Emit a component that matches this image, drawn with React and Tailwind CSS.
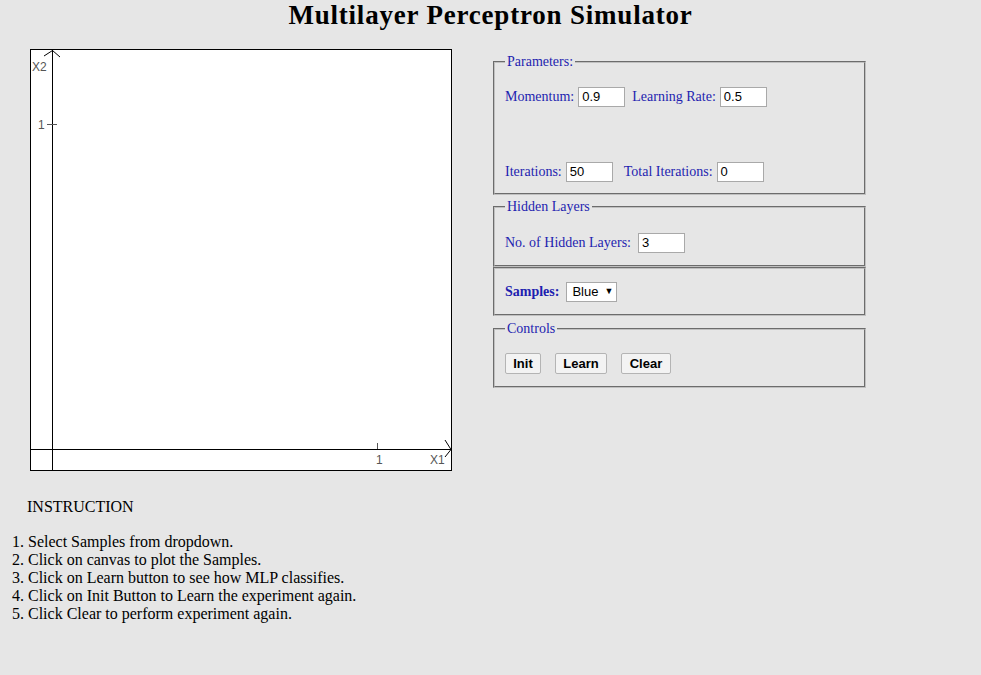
// App.jsx
import React from 'react';

const serif = "font-['Liberation_Serif','Times_New_Roman',serif]";
const sans = "font-['Liberation_Sans',Arial,sans-serif]";

function Field({ value }) {
    return (
        <div className={`w-[47px] h-[20px] bg-white border border-[#a9a9a9] pl-[3px] flex items-center text-[13px] text-black ${sans}`}>
            {value}
        </div>
    );
}

function Box({ title, className = '', children }) {
    return (
        <fieldset className={`border-2 [border-style:groove] border-[#c0c0c0] px-[10px] m-0 ${className}`}>
            {title && <legend className="px-[2px] text-[14px] leading-[16px] text-[#1e1eb0]">{title}</legend>}
            {children}
        </fieldset>
    );
}

function Plot() {
    return (
        <div className="w-[422px] h-[422px] border border-black bg-white shrink-0">
            <svg width="420" height="420" viewBox="0 0 420 420">
                <g stroke="#000" strokeWidth="1" fill="none">
                    <line x1="21.5" y1="0" x2="21.5" y2="420" />
                    <line x1="0" y1="399.5" x2="420" y2="399.5" />
                    <polyline points="13,6 21.5,0.5 29,7" />
                    <polyline points="414,390 420,399.5 414,407" />
                </g>
                <g stroke="#555" strokeWidth="1">
                    <line x1="16" y1="74.5" x2="26" y2="74.5" />
                    <line x1="346.5" y1="393" x2="346.5" y2="399" />
                </g>
                <g fill="#555" fontSize="12" fontFamily="'Liberation Sans', Arial, sans-serif">
                    <text x="1" y="21">X2</text>
                    <text x="7" y="79">1</text>
                    <text x="345" y="414">1</text>
                    <text x="399" y="414">X1</text>
                </g>
            </svg>
        </div>
    );
}

function Btn({ label, width }) {
    return (
        <button className={`h-[21px] ${width} bg-[#f3f3f3] border border-[#b4b4b4] rounded-[2px] text-[13px] font-bold text-black ${sans} flex items-center justify-center`}>
            {label}
        </button>
    );
}

function App() {
    const steps = [
        'Select Samples from dropdown.',
        'Click on canvas to plot the Samples.',
        'Click on Learn button to see how MLP classifies.',
        'Click on Init Button to Learn the experiment again.',
        'Click Clear to perform experiment again.',
    ];

    return (
        <div className={`bg-[#e6e6e6] min-h-screen w-full text-black ${serif}`}>
            <h1 className="text-center text-[27px] font-bold leading-[30px] tracking-[0.8px] m-0">Multilayer Perceptron Simulator</h1>

            <div className="flex items-start">
                <div className="ml-[30px] mt-[19px]">
                    <Plot />
                </div>

                <div className="ml-[41px] mt-[24px] w-[373px] flex flex-col">
                    {/* parameters */}
                    <Box title="Parameters:" className="pb-[11px]">
                        <div className="flex items-center mt-[16px] text-[14px] text-[#1e1eb0]">
                            <span>Momentum:</span>
                            <span className="ml-[4px]"><Field value="0.9" /></span>
                            <span className="ml-[7px]">Learning Rate:</span>
                            <span className="ml-[4px]"><Field value="0.5" /></span>
                        </div>
                        <div className="flex items-center mt-[54px] text-[14px] text-[#1e1eb0]">
                            <span>Iterations:</span>
                            <span className="ml-[4px]"><Field value="50" /></span>
                            <span className="ml-[11px]">Total Iterations:</span>
                            <span className="ml-[4px]"><Field value="0" /></span>
                        </div>
                    </Box>

                    {/* hidden layers */}
                    <Box title="Hidden Layers" className="mt-[4px] pb-[12px]">
                        <div className="flex items-center mt-[17px] text-[14px] text-[#1e1eb0]">
                            <span>No. of Hidden Layers:</span>
                            <span className="ml-[7px]"><Field value="3" /></span>
                        </div>
                    </Box>

                    {/* samples */}
                    <Box className="pt-[12px] pb-[12px]">
                        <div className="flex items-center text-[14px] text-[#1e1eb0]">
                            <span className="font-bold">Samples:</span>
                            <div className={`ml-[7px] w-[51px] h-[20px] bg-white border border-[#a9a9a9] pl-[5px] flex items-center text-[13px] text-black ${sans}`}>
                                Blue
                                <span className="ml-[6px] text-[9px]">▼</span>
                            </div>
                        </div>
                    </Box>

                    {/* controls */}
                    <Box title="Controls" className="mt-[5px] pb-[12px]">
                        <div className="flex items-center gap-[14px] mt-[16px]">
                            <Btn label="Init" width="w-[36px]" />
                            <Btn label="Learn" width="w-[52px]" />
                            <Btn label="Clear" width="w-[50px]" />
                        </div>
                    </Box>
                </div>
            </div>

            <div className="mt-[27px] ml-[27px] text-[16px] leading-[18px]">INSTRUCTION</div>
            <ol className="mt-[17px] ml-[12px] text-[16px] leading-[18px] list-none p-0">
                {steps.map((s, i) => (
                    <li key={i}>{i + 1}. {s}</li>
                ))}
            </ol>
        </div>
    );
}

export default App;
